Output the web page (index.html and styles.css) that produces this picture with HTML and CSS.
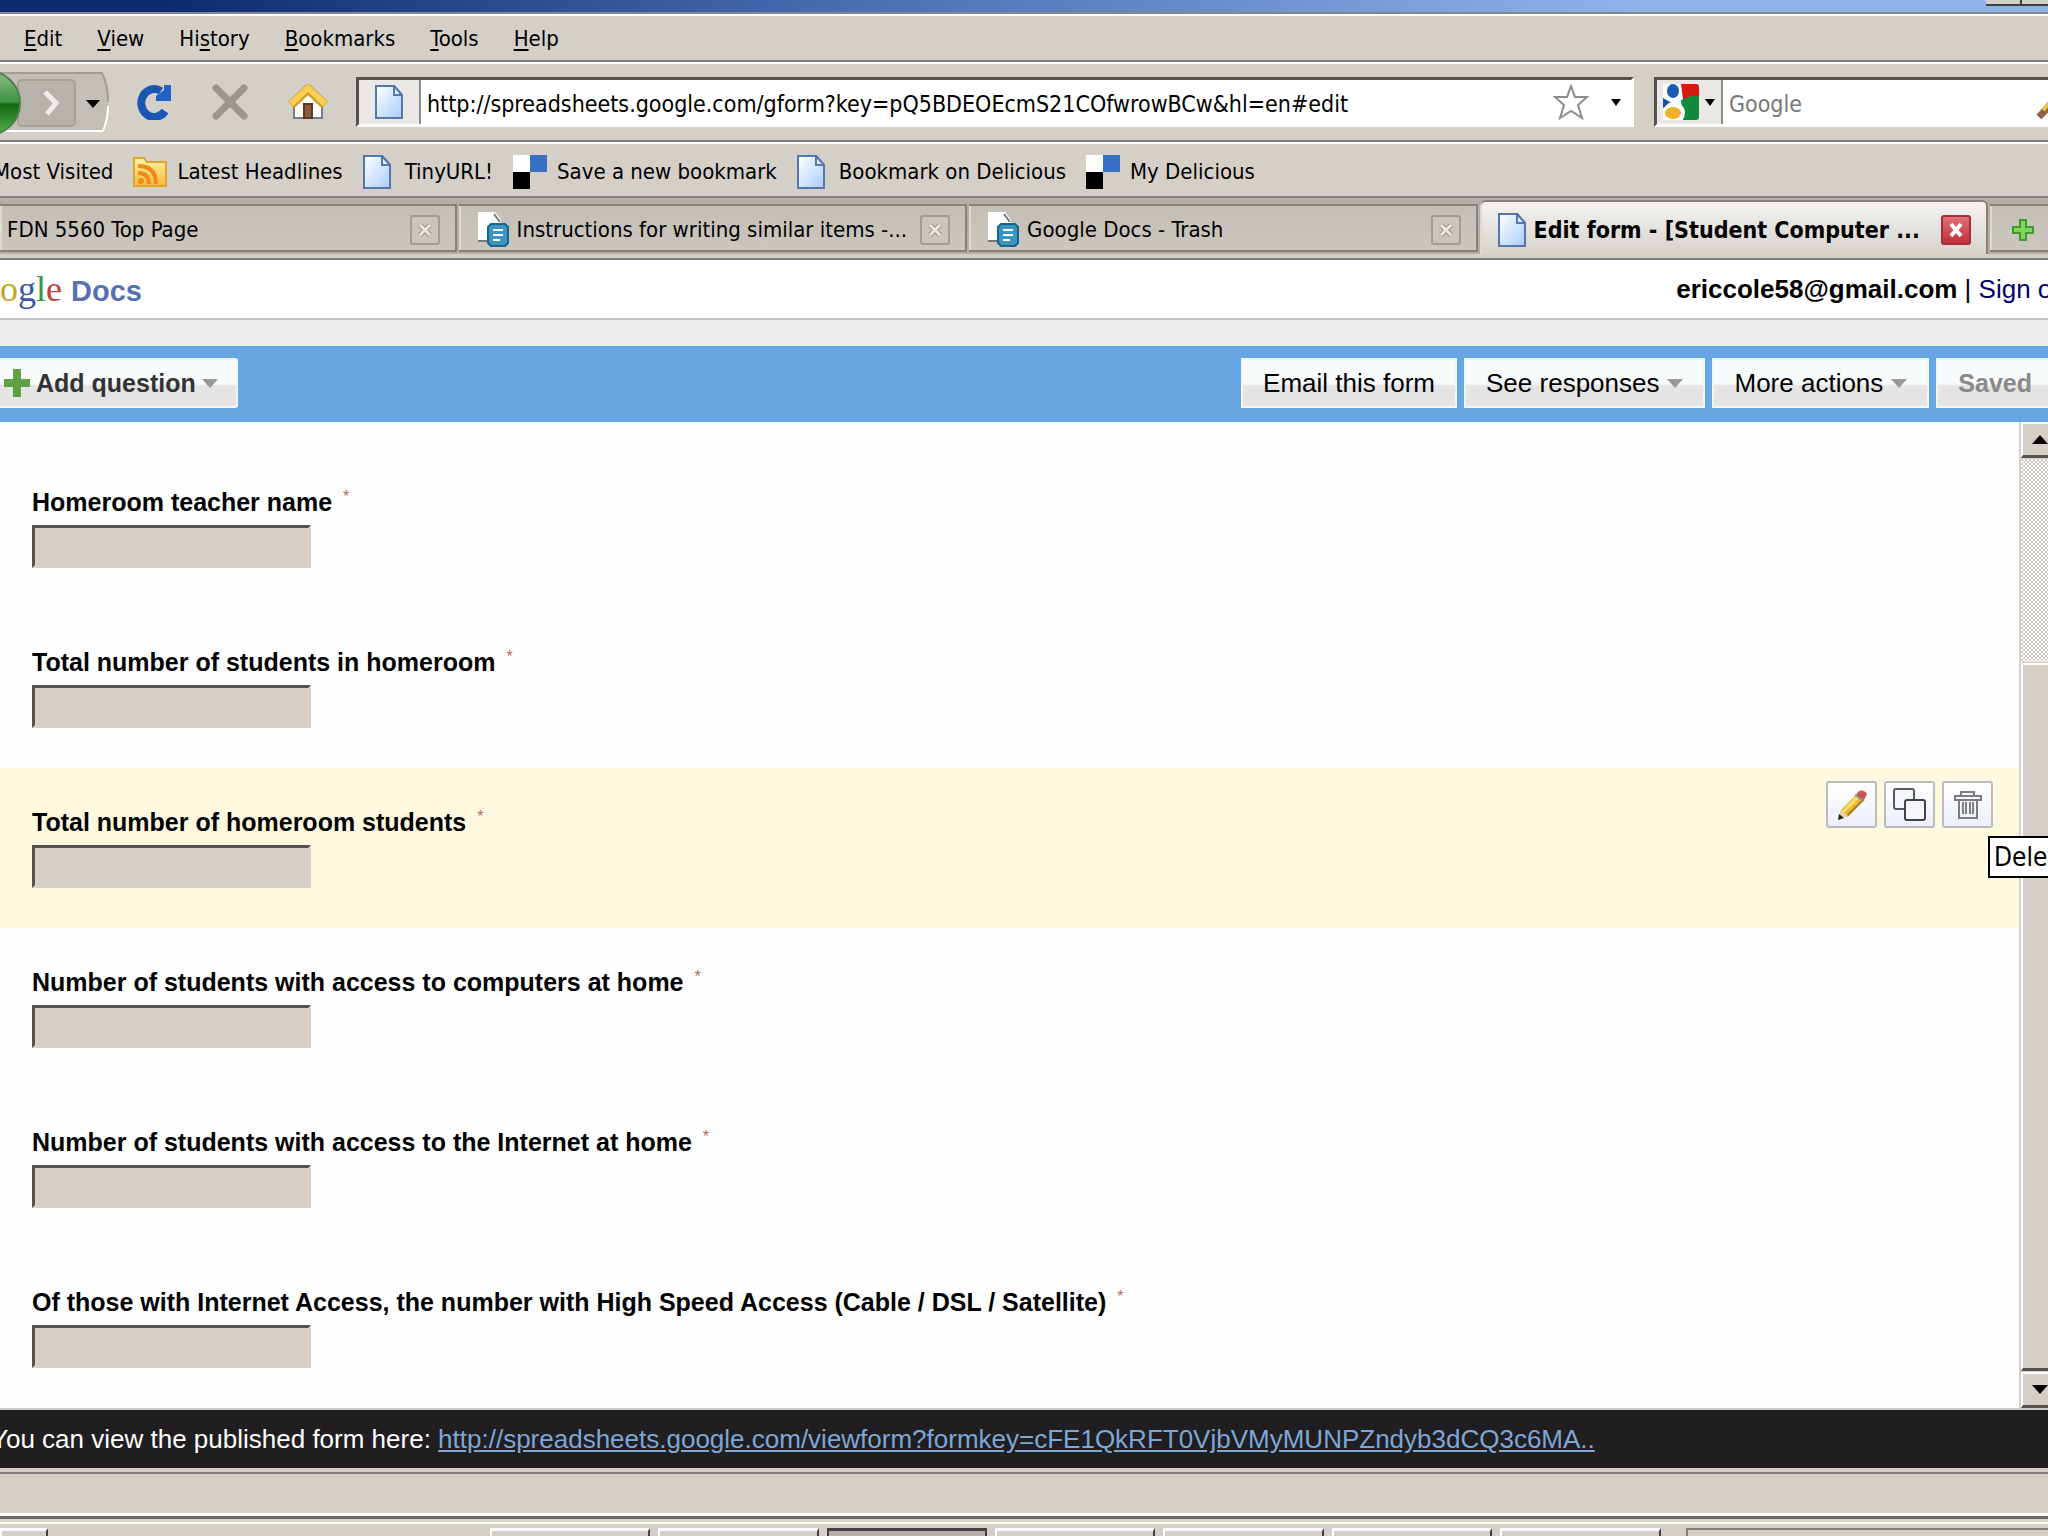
FILE: index.html
```
<!DOCTYPE html>
<html lang="en">
<head>
    <meta charset="UTF-8">
    <meta name="viewport" content="width=device-width, initial-scale=1.0">
    <title>Edit form - [Student Computer Access]</title>
    <link rel="stylesheet" href="styles.css">
</head>
<body>
    <!-- shared icons -->
    <svg class="defs" width="0" height="0" aria-hidden="true">
        <defs>
            <linearGradient id="paper" x1="0" y1="0" x2="1" y2="1">
                <stop offset="0" stop-color="#fff"/>
                <stop offset="1" stop-color="#a9cdfb"/>
            </linearGradient>
            <linearGradient id="green" x1="0" y1="0" x2="0" y2="1">
                <stop offset="0" stop-color="#8cc08a"/>
                <stop offset=".48" stop-color="#3f9340"/>
                <stop offset=".52" stop-color="#0f6b12"/>
                <stop offset="1" stop-color="#59b04f"/>
            </linearGradient>
            <linearGradient id="rss" x1="0" y1="0" x2="0" y2="1">
                <stop offset="0" stop-color="#fff3a8"/>
                <stop offset="1" stop-color="#f8b83a"/>
            </linearGradient>
        </defs>
        <symbol id="page" viewBox="0 0 28 34">
            <path d="M1 1h18l8 9v23H1z" fill="url(#paper)" stroke="#5577b0" stroke-width="2"/>
            <path d="M19 1v9h8z" fill="#e4efff" stroke="#5577b0" stroke-width="2"/>
        </symbol>
        <symbol id="delicious" viewBox="0 0 34 34">
            <path d="M0 0h17v17H0z" fill="#fff"/>
            <path d="M17 0h17v17H17z" fill="#3671c6"/>
            <path d="M0 17h17v17H0z" fill="#000"/>
            <path d="M17 17h17v17H17z" fill="#d4d0c8"/>
        </symbol>
        <symbol id="doc" viewBox="0 0 32 35">
            <path d="M1 0h17l6 8v21H1z" fill="#fff"/>
            <path d="M1 29h12M17 2l6 8" fill="none" stroke="#777" stroke-width="2"/>
            <path d="M14 12h14l3 3v16l-3 3H14l-3-3V15z" fill="#3d94bd" stroke="#17668f" stroke-width="2"/>
            <path d="M16 18h10M16 23h10M16 28h7" stroke="#fff" stroke-width="2"/>
        </symbol>
        <symbol id="cross" viewBox="0 0 16 16">
            <path d="M3 3l10 10M13 3L3 13" stroke="#979389" stroke-width="5"/>
            <path d="M3 3l10 10M13 3L3 13" stroke="#e8e6e2" stroke-width="3"/>
        </symbol>
    </svg>

    <div class="browser">
        <div class="titlebar">
            <div class="window-buttons"><span></span><span></span></div>
        </div>

        <nav class="menubar">
            <a href="#"><u>E</u>dit</a>
            <a href="#"><u>V</u>iew</a>
            <a href="#">Hi<u>s</u>tory</a>
            <a href="#"><u>B</u>ookmarks</a>
            <a href="#"><u>T</u>ools</a>
            <a href="#"><u>H</u>elp</a>
        </nav>

        <div class="toolbar">
            <button class="icon-btn" aria-label="Back and forward">
                <svg width="110" height="66" viewBox="0 0 110 66">
                    <path d="M0 4h102q6 12 6 29t-6 29H0z" fill="#c3bfb8"/>
                    <path d="M0 4h102q6 12 6 29" fill="none" stroke="#a19d96" stroke-width="2"/>
                    <path d="M0 62h103q5-12 5-25" fill="none" stroke="#fff" stroke-width="2"/>
                    <rect x="18" y="11" width="57" height="46" rx="4" fill="#b7b3ac" stroke="#a5a19a" stroke-width="2"/>
                    <path d="M45 23l11 11-9 11" fill="none" stroke="#ececea" stroke-width="5"/>
                    <path d="M86 31h14l-7 8z" fill="#000"/>
                    <circle cx="-12" cy="34" r="32" fill="url(#green)" stroke="#4c7d4b" stroke-width="2"/>
                </svg>
            </button>
            <button class="icon-btn" aria-label="Reload">
                <svg width="36" height="36" viewBox="0 0 36 36">
                    <path d="M29 27A13 14 0 1 1 25 7" fill="none" stroke="#1a57b5" stroke-width="8"/>
                    <path d="M35 1v16H20v-5l8-6V1z" fill="#1f62c8"/>
                </svg>
            </button>
            <button class="icon-btn" aria-label="Stop">
                <svg width="36" height="36" viewBox="0 0 36 36">
                    <path d="M4 4l28 28M32 4L4 32" stroke="#9a9690" stroke-width="7" stroke-linecap="round"/>
                </svg>
            </button>
            <button class="icon-btn" aria-label="Home">
                <svg width="40" height="36" viewBox="0 0 40 36">
                    <path d="M6 16L20 5l14 11v18H6z" fill="#fdfbf2"/>
                    <path d="M6 20v14h28V20" fill="none" stroke="#6f7f90" stroke-width="2"/>
                    <path d="M16 20h8v14h-8z" fill="#8a5a3c" stroke="#5d3a24" stroke-width="2"/>
                    <path d="M3 21L20 5l17 16" fill="none" stroke="#d69a1c" stroke-width="9"/>
                    <path d="M3 20L20 4l17 16" fill="none" stroke="#f6d057" stroke-width="6"/>
                </svg>
            </button>
            <div class="field address">
                <span class="field-icon"><svg width="28" height="34"><use href="#page"/></svg></span>
                <input type="text" aria-label="Address" value="http://spreadsheets.google.com/gform?key=pQ5BDEOEcmS21COfwrowBCw&amp;hl=en#edit">
                <button class="icon-btn" aria-label="Bookmark this page">
                    <svg width="36" height="36" viewBox="0 0 36 36">
                        <path d="M18 2l4 11h12l-9 8 4 13-11-7-11 7 4-13-9-8h12z" fill="#fff" stroke="#8c8c8c" stroke-width="2"/>
                    </svg>
                </button>
                <button class="icon-btn drop" aria-label="Show history"><svg width="10" height="7"><path d="M0 0h10L5 7z"/></svg></button>
            </div>
            <div class="field search">
                <button class="field-icon engine" aria-label="Search engine">
                    <svg width="36" height="36" viewBox="0 0 36 36">
                        <rect width="36" height="36" rx="3" fill="#fff"/>
                        <path d="M18 0h15q3 0 3 3v12H20z" fill="#d8190f"/>
                        <path d="M18 16l10-4h8v21q0 3-3 3H20z" fill="#118a3c"/>
                        <path d="M0 14l9 5-9 5z" fill="#1b4fa3"/>
                        <ellipse cx="10" cy="8" rx="8" ry="10" fill="#fff"/>
                        <ellipse cx="10" cy="7" rx="6" ry="7" fill="#1a5bb5"/>
                        <circle cx="11" cy="29" r="11" fill="#fff"/>
                        <ellipse cx="10" cy="29" rx="8" ry="6" fill="#efae2b"/>
                    </svg>
                    <svg width="10" height="7"><path d="M0 0h10L5 7z"/></svg>
                </button>
                <input type="text" aria-label="Search" placeholder="Google">
                <svg width="20" height="36" viewBox="0 0 20 36">
                    <path d="M4 33L16 20" stroke="#8f6248" stroke-width="7"/>
                    <path d="M8 26L18 16" stroke="#eec04e" stroke-width="4"/>
                </svg>
            </div>
        </div>

        <div class="bookmarks">
            <a href="#">Most Visited</a>
            <a href="#">
                <svg width="34" height="30" viewBox="0 0 34 30">
                    <path d="M1 1h10l3 4h19v24H1z" fill="url(#rss)" stroke="#e0a62c" stroke-width="2"/>
                    <circle cx="8" cy="24" r="3" fill="#ef8b1d"/>
                    <path d="M5 16q11 0 11 11M5 9q18 0 18 18" fill="none" stroke="#ef8b1d" stroke-width="4"/>
                </svg>
                Latest Headlines
            </a>
            <a href="#" class="wide"><svg width="28" height="34"><use href="#page"/></svg>TinyURL!</a>
            <a href="#"><svg width="34" height="34"><use href="#delicious"/></svg>Save a new bookmark</a>
            <a href="#" class="wide"><svg width="28" height="34"><use href="#page"/></svg>Bookmark on Delicious</a>
            <a href="#"><svg width="34" height="34"><use href="#delicious"/></svg>My Delicious</a>
        </div>

        <div class="tabs">
            <div class="tab first">
                <span class="tab-title">FDN 5560 Top Page</span>
                <button class="close" aria-label="Close tab"><svg width="16" height="16"><use href="#cross"/></svg></button>
            </div>
            <div class="tab">
                <svg width="32" height="35"><use href="#doc"/></svg>
                <span class="tab-title">Instructions for writing similar items -...</span>
                <button class="close" aria-label="Close tab"><svg width="16" height="16"><use href="#cross"/></svg></button>
            </div>
            <div class="tab">
                <svg width="32" height="35"><use href="#doc"/></svg>
                <span class="tab-title">Google Docs - Trash</span>
                <button class="close" aria-label="Close tab"><svg width="16" height="16"><use href="#cross"/></svg></button>
            </div>
            <div class="tab active">
                <svg width="28" height="34"><use href="#page"/></svg>
                <span class="tab-title">Edit form - [Student Computer ...</span>
                <button class="close" aria-label="Close tab"><svg width="16" height="16" viewBox="0 0 16 16"><path d="M3 2l10 12M13 2L3 14" stroke="#fff" stroke-width="4"/></svg></button>
            </div>
            <button class="tab new-tab" aria-label="New tab">
                <svg width="22" height="22" viewBox="0 0 22 22"><path d="M8 1h6v7h7v6h-7v7H8v-7H1V8h7z" fill="#7fd65a" stroke="#3f9a2c" stroke-width="2"/></svg>
            </button>
        </div>

        <header class="page-header">
            <div class="logo"><span class="y">o</span><span class="b">g</span><span class="g">l</span><span class="r">e</span> <span class="docs">Docs</span></div>
            <div class="account"><b>ericcole58@gmail.com</b> | <a href="#">Sign out</a></div>
        </header>

        <div class="actions">
            <button class="btn add">
                <svg width="26" height="28" viewBox="0 0 26 28"><path d="M9 0h8v10h9v8h-9v10H9V18H0v-8h9z" fill="#5fa245"/></svg>
                Add question
                <svg class="arrow" width="16" height="9"><path d="M0 0h16L8 9z"/></svg>
            </button>
            <div class="actions-right">
                <button class="btn">Email this form</button>
                <button class="btn">See responses <svg class="arrow" width="16" height="9"><path d="M0 0h16L8 9z"/></svg></button>
                <button class="btn">More actions <svg class="arrow" width="16" height="9"><path d="M0 0h16L8 9z"/></svg></button>
                <button class="btn saved" disabled>Saved</button>
            </div>
        </div>

        <div class="content">
            <form class="questions">
                <div class="question">
                    <label for="q1">Homeroom teacher name <sup>*</sup></label>
                    <input type="text" id="q1" disabled>
                </div>
                <div class="question">
                    <label for="q2">Total number of students in homeroom <sup>*</sup></label>
                    <input type="text" id="q2" disabled>
                </div>
                <div class="question selected">
                    <label for="q3">Total number of homeroom students <sup>*</sup></label>
                    <input type="text" id="q3" disabled>
                    <div class="tools">
                        <button type="button" aria-label="Edit">
                            <svg width="32" height="32" viewBox="0 0 32 32">
                                <path d="M3 30l2-9L21 5l7 6-16 16z" fill="#e9b92f"/>
                                <path d="M7 23L23 7" stroke="#fbe072" stroke-width="3"/>
                                <path d="M11 27L27 11" stroke="#b07a1c" stroke-width="2"/>
                                <path d="M3 30l2-9 7 6z" fill="#e8d2ac"/>
                                <path d="M2 31l1-6 5 4z" fill="#222"/>
                                <path d="M20 6l3-4q5-2 8 3l-3 6z" fill="#c9574c"/>
                                <path d="M19 6l9 6" stroke="#8e8e8e" stroke-width="2"/>
                            </svg>
                        </button>
                        <button type="button" aria-label="Duplicate">
                            <svg width="34" height="34" viewBox="0 0 34 34">
                                <rect x="1" y="1" width="20" height="20" rx="2" fill="#f4f6fb" stroke="#555960" stroke-width="2"/>
                                <rect x="12" y="12" width="20" height="20" rx="2" fill="#f4f6fb" stroke="#3f4349" stroke-width="2"/>
                            </svg>
                        </button>
                        <button type="button" aria-label="Delete">
                            <svg width="30" height="30" viewBox="0 0 30 30">
                                <path d="M8 6V2h13v4M2 6h26v4H2zM6 10h18v18H6z" fill="none" stroke="#7d7d7f" stroke-width="2"/>
                                <path d="M10 12v12M13 12v12M17 12v12M20 12v12" stroke="#7d7d7f" stroke-width="2"/>
                            </svg>
                        </button>
                        <span class="tooltip">Delete</span>
                    </div>
                </div>
                <div class="question">
                    <label for="q4">Number of students with access to computers at home <sup>*</sup></label>
                    <input type="text" id="q4" disabled>
                </div>
                <div class="question">
                    <label for="q5">Number of students with access to the Internet at home <sup>*</sup></label>
                    <input type="text" id="q5" disabled>
                </div>
                <div class="question">
                    <label for="q6">Of those with Internet Access, the number with High Speed Access (Cable / DSL / Satellite) <sup>*</sup></label>
                    <input type="text" id="q6" disabled>
                </div>
            </form>
            <div class="scrollbar">
                <button class="raised" aria-label="Scroll up"><svg width="16" height="9"><path d="M8 0l8 9H0z"/></svg></button>
                <div class="track"></div>
                <div class="raised thumb"></div>
                <button class="raised" aria-label="Scroll down"><svg width="16" height="9"><path d="M0 0h16L8 9z"/></svg></button>
            </div>
        </div>

        <footer class="published">
            You can view the published form here: <a href="#">http://spreadsheets.google.com/viewform?formkey=cFE1QkRFT0VjbVMyMUNPZndyb3dCQ3c6MA..</a>
        </footer>

        <div class="statusbar"></div>
        <div class="taskbar">
            <div class="task start"></div>
            <div class="task-list">
                <div class="task"></div>
                <div class="task"></div>
                <div class="task pressed"></div>
                <div class="task"></div>
                <div class="task"></div>
                <div class="task"></div>
                <div class="task"></div>
            </div>
            <div class="tray"></div>
        </div>
    </div>
</body>
</html>
```

FILE: styles.css
```
* {
    box-sizing: border-box;
}

body {
    margin: 0;
    overflow: hidden;
    background-color: #d4d0c8;
    color: #000;
    font-family: "DejaVu Sans Condensed", "DejaVu Sans", sans-serif;
    font-size: 23px;
}

button, input {
    font: inherit;
    color: inherit;
}

a {
    color: inherit;
    text-decoration: none;
}

svg {
    display: block;
    flex: none;
}

.defs {
    position: absolute;
}

/* the window runs a little past the right edge of the screen */
.browser {
    display: flex;
    flex-direction: column;
    height: 100vh;
    margin-right: -10px;
    white-space: nowrap;
}

.titlebar {
    display: flex;
    justify-content: flex-end;
    height: 14px;
    background: linear-gradient(90deg, #0c2a72 8%, #4a6fb5 42%, #8fb4ea 80%);
    border-bottom: 2px solid #85858f;
}

.window-buttons {
    display: flex;
    height: 6px;
}

.window-buttons span {
    width: 36px;
    background: #d4d0c8;
    border-right: 2px solid #404040;
    border-bottom: 2px solid #404040;
}

.menubar {
    display: flex;
    align-items: center;
    gap: 35px;
    height: 48px;
    padding-left: 24px;
    border-top: 2px solid #fff;
    border-bottom: 2px solid #808080;
    font-size: 22px;
}

.menubar u {
    text-underline-offset: 3px;
}

.toolbar {
    display: flex;
    align-items: center;
    gap: 40px;
    height: 80px;
    border-top: 2px solid #fff;
    border-bottom: 2px solid #808080;
}

.icon-btn {
    padding: 0;
    border: none;
    background: none;
}

.toolbar > .icon-btn:first-child {
    margin-right: -14px;
}

.field {
    display: flex;
    align-items: center;
    height: 50px;
    background: #fff;
    border: 3px solid #fff;
    border-top-color: #55524e;
    border-left-color: #55524e;
}

.field input {
    flex: 1;
    min-width: 0;
    padding: 3px 6px 0;
    border: none;
    background: none;
}

.field-icon {
    display: flex;
    align-items: center;
    justify-content: center;
    gap: 6px;
    width: 62px;
    height: 100%;
    padding: 0;
    border: none;
    border-right: 2px solid #8e8b85;
    background: #e9e8e4;
}

.address {
    flex: 1;
    margin-left: -12px;
}

.address .drop {
    margin: 0 10px 0 22px;
}

.search {
    width: 404px;
    margin-left: -20px;
}

.engine {
    width: 66px;
}

.search input::placeholder {
    color: #777;
    opacity: 1;
}

.bookmarks {
    display: flex;
    align-items: center;
    gap: 20px;
    height: 56px;
    margin-left: -7px;
    padding-top: 3px;
    border-top: 2px solid #fff;
    border-bottom: 2px solid #808080;
    font-size: 22px;
}

.bookmarks a {
    display: flex;
    align-items: center;
    gap: 10px;
}

.bookmarks .wide {
    gap: 14px;
}

.tabs {
    display: flex;
    align-items: flex-end;
    gap: 2px;
    height: 62px;
    padding-bottom: 6px;
    background: linear-gradient(#b2afa8 56px, #d4d0c8 56px);
    border-bottom: 2px solid #808080;
    font-size: 22px;
}

.tab {
    flex: 510 1 0;
    display: flex;
    align-items: center;
    gap: 8px;
    min-width: 0;
    height: 48px;
    padding: 3px 15px 0 18px;
    border: 2px solid #85827b;
    border-width: 2px 2px 2px 0;
    background: linear-gradient(#c3bfb7, #cbc7be);
    box-shadow: inset 2px 0 #dedbd5;
}

.tab-title {
    flex: 1;
    min-width: 0;
}

.first {
    flex-grow: 466;
    padding-left: 7px;
}

.active {
    height: 54px;
    margin-bottom: -2px;
    border-bottom: none;
    border-radius: 6px 6px 0 0;
    background: linear-gradient(#f4f3f1, #d6d3cc);
    font-size: 23px;
    font-weight: bold;
}

.new-tab {
    flex: none;
    width: 68px;
    padding: 3px 22px 0;
}

.close {
    display: flex;
    align-items: center;
    justify-content: center;
    width: 30px;
    height: 30px;
    padding: 0;
    border: 2px solid #a19d95;
    border-radius: 3px;
    background: #c9c5bd;
}

.active .close {
    border-color: #a82c35;
    background: linear-gradient(#e0707a, #c22f3a);
}

/* Google Docs page */
.page-header,
.actions,
.published,
.question {
    font-family: "Liberation Sans", Arial, sans-serif;
}

.page-header {
    display: flex;
    align-items: center;
    justify-content: space-between;
    height: 60px;
    background: #fff;
    border-bottom: 2px solid #c4c4c6;
    font-size: 26px;
}

.logo {
    font-family: "Liberation Serif", serif;
    font-size: 36px;
}

.logo .y { color: #c2a526; }
.logo .b { color: #3a55a8; }
.logo .g { color: #3a9444; }
.logo .r { color: #c0433c; }

.docs {
    color: #5670b0;
    font-family: "Liberation Sans", Arial, sans-serif;
    font-size: 29px;
    font-weight: bold;
}

.account {
    margin-right: -16px;
}

.account a {
    color: #00006b;
}

.actions {
    display: flex;
    align-items: center;
    justify-content: space-between;
    height: 102px;
    padding: 26px 0 2px;
    background: linear-gradient(#eee 26px, #67a6e3 26px);
    font-size: 26px;
}

.actions-right {
    display: flex;
    gap: 7px;
    margin-right: -12px;
}

.btn {
    display: flex;
    align-items: center;
    gap: 8px;
    height: 50px;
    padding: 0 20px;
    border: 2px solid #f0f5fa;
    background: linear-gradient(#f8fbfc 52%, #e4e4e4 56%);
}

.arrow {
    fill: #999;
}

.add {
    gap: 6px;
    padding: 0 18px 0 4px;
    border-left: none;
    border-radius: 0 3px 3px 0;
    color: #333;
    font-size: 25px;
    font-weight: bold;
}

.saved {
    padding-right: 36px;
    color: #8a8a8a;
    font-size: 25px;
    font-weight: bold;
}

.content {
    flex: 1;
    display: flex;
    min-height: 0;
}

.questions {
    flex: 1;
    padding-top: 26px;
    background: #fefefe;
}

.question {
    position: relative;
    height: 160px;
    padding: 38px 32px 0;
    font-size: 25px;
    font-weight: bold;
    line-height: 32px;
}

.question label {
    display: block;
    margin-bottom: 7px;
}

.question sup {
    margin-left: 4px;
    color: #b06a5c;
    font-size: 16px;
    font-weight: normal;
    line-height: 0;
}

.question input {
    display: block;
    width: 279px;
    height: 43px;
    border: 3px solid #d4d0c8;
    border-top-color: #55524e;
    border-left-color: #55524e;
    background: #d4d0c8;
}

.selected {
    background: #fef9de;
}

.tools {
    position: absolute;
    top: 13px;
    right: 26px;
    display: flex;
    gap: 7px;
}

.tools button {
    display: flex;
    align-items: center;
    justify-content: center;
    width: 51px;
    height: 47px;
    padding: 0;
    border: 2px solid #bcbcc0;
    border-radius: 3px;
    background: linear-gradient(#fff, #eceffa);
}

.tooltip {
    position: absolute;
    top: 55px;
    left: 162px;
    z-index: 1;
    padding: 3px 4px;
    border: 2px solid #000;
    background: #fff;
    font-family: "DejaVu Sans Condensed", "DejaVu Sans", sans-serif;
    font-size: 26px;
    font-weight: normal;
}

.scrollbar {
    display: flex;
    flex-direction: column;
    gap: 1px;
    width: 39px;
    padding-left: 2px;
    background: #d4d0c8;
}

.raised {
    display: flex;
    align-items: center;
    justify-content: center;
    height: 36px;
    padding: 0;
    border: 2px solid #fff;
    border-right-color: #404040;
    border-bottom: 3px solid #55524e;
    background: #d4d0c8;
}

.track {
    flex: 205;
    background: repeating-conic-gradient(#fff 0 25%, #d0ccc4 0 50%) 0 0 / 4px 4px;
}

.thumb {
    flex: 708;
}

.published {
    height: 60px;
    margin-left: -9px;
    border-top: 2px solid #c8c8c8;
    background: #201e20;
    color: #fff;
    font-size: 26px;
    line-height: 58px;
}

.published a {
    color: #7da7d6;
    text-decoration: underline;
}

.statusbar {
    height: 48px;
    border-top: 4px solid #d4d0c8;
    border-bottom: 3px solid #fff;
    box-shadow: inset 0 2px #808080;
}

.taskbar {
    display: flex;
    gap: 8px;
    height: 20px;
    padding-top: 9px;
    border-top: 3px solid #6b6862;
    box-shadow: inset 0 3px #d4d0c8, inset 0 5px #fff;
}

.task-list {
    flex: 1172;
    display: flex;
    gap: 8px;
    margin-left: 434px;
}

.task {
    flex: 1;
    border-top: 3px solid #fff;
    border-left: 2px solid #fff;
    border-right: 2px solid #404040;
}

.start {
    flex: none;
    width: 48px;
}

.pressed {
    border-color: #404040;
    background: #b5b2ab;
}

.tray {
    flex: 370;
    margin-left: 18px;
    border-top: 2px solid #808080;
    border-left: 2px solid #808080;
}
```
